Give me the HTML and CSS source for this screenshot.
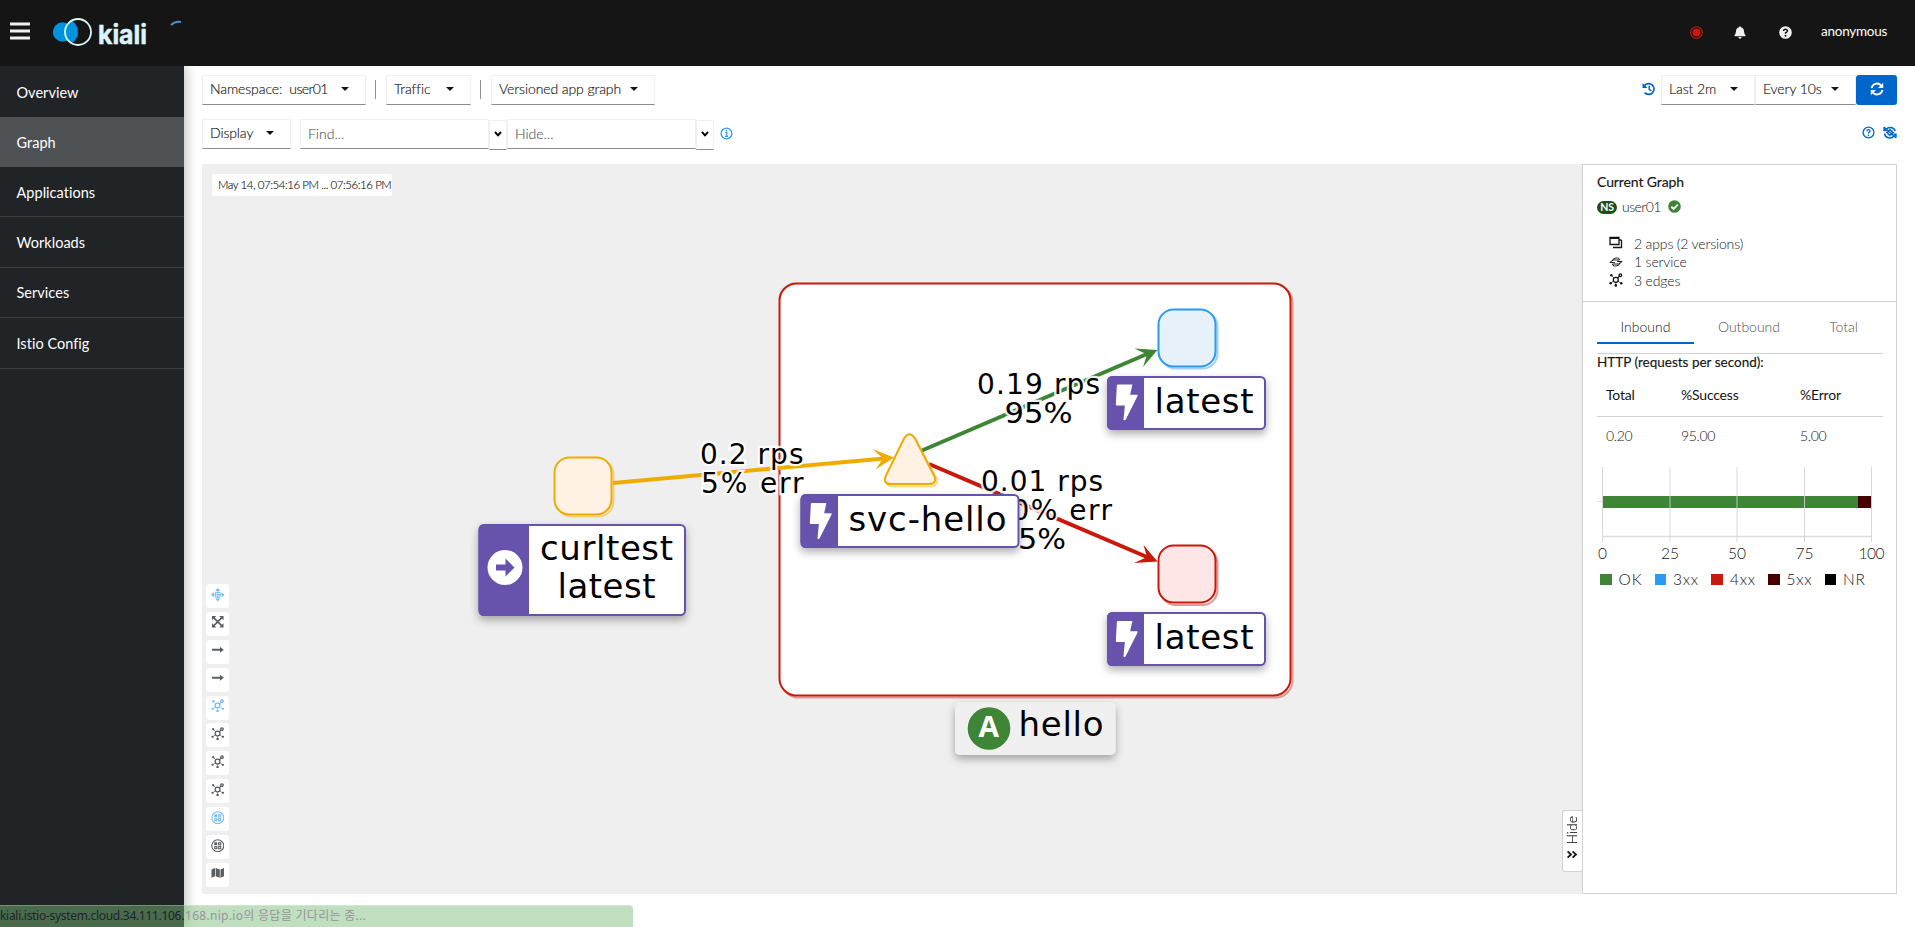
FILE: index.html
```
<!DOCTYPE html>
<html lang="en">
<head>
<meta charset="utf-8">
<title>Kiali</title>
<link rel="stylesheet" href="styles.css">
</head>
<body>
<svg class="defs" width="0" height="0" aria-hidden="true">
  <defs>
    <symbol id="topo" viewBox="0 0 14 14">
      <g fill="none" stroke="currentColor" stroke-width="1.3">
        <circle cx="6.8" cy="6.8" r="2.5"/><circle cx="11.4" cy="2.2" r="1.3"/>
        <path d="M8.6 5l1.900-1.900"/>
        <path d="M5 5L2.800 2.800M4.600 8.200L2 10M9 8.200l2.600 1.800M6.800 9.300v2" stroke-width=".7"/>
      </g>
      <g fill="currentColor"><circle cx="2.300" cy="2.300" r="1.200"/><circle cx="1.600" cy="10.200" r="1.200"/><circle cx="12.300" cy="10.200" r="1.200"/><circle cx="6.800" cy="12.400" r="1.300"/></g>
    </symbol>
    <symbol id="ns" viewBox="0 0 14 14">
      <g fill="none" stroke="currentColor" stroke-width="1.1"><circle cx="7" cy="7" r="6.200"/>
        <rect x="7.900" y="3.900" width="2.200" height="2.200"/><rect x="3.900" y="7.900" width="2.200" height="2.200"/><rect x="7.900" y="7.900" width="2.200" height="2.200"/></g>
      <rect x="3.400" y="3.400" width="3" height="3" fill="currentColor"/>
    </symbol>
    <symbol id="arrow" viewBox="0 0 14 14"><path d="M1 5.900h8.300V3.900l4 3.100-4 3.100V8.100H1z" fill="currentColor"/></symbol>
    <symbol id="bolt" viewBox="0 0 22 36"><path d="M2.300 .6h14.500l-2.200 10h6.700q1.200 .2 .5 1.400L10.300 35q-1.600 2-2.300 .2L9.400 21.200H1.500q-1.200-.2-1-1.400L1.500 1.300z" fill="#fff"/></symbol>
  </defs>
</svg>
<header class="masthead">
  <svg class="burger" width="20" height="18" viewBox="0 0 20 18"><path d="M0 2h20M0 9h20M0 16h20" stroke="#f0f0f0" stroke-width="3"/></svg>
  <svg class="logo" width="100" height="36" viewBox="0 0 100 36">
    <defs><clipPath id="ring"><circle cx="26" cy="18" r="13"/></clipPath></defs>
    <circle cx="10.500" cy="18" r="9.700" fill="#0093dd"/>
    <g clip-path="url(#ring)"><circle cx="26" cy="18" r="13" fill="#151515"/><circle cx="12.500" cy="18" r="13.500" fill="#0093dd"/></g>
    <circle cx="26" cy="18" r="13" fill="none" stroke="#d9f5fd" stroke-width="1.800"/>
    <text x="46" y="29.500" textLength="49" lengthAdjust="spacingAndGlyphs" class="brand">kiali</text>
  </svg>
  <svg class="spin" width="12" height="7" viewBox="0 0 12 7"><path d="M1 5.200Q5 .8 11 2" fill="none" stroke="#4a90cf" stroke-width="1.900"/></svg>
  <div class="tools">
    <svg width="13" height="13" viewBox="0 0 13 13"><circle cx="6.500" cy="6.500" r="5.800" fill="none" stroke="#c9190b" stroke-width="1.100"/><circle cx="6.500" cy="6.500" r="4" fill="#c9190b"/></svg>
    <svg class="bell" width="12" height="13" viewBox="0 0 12 13"><path d="M6 .3q.8 0 .8 1 3 .6 3.200 4Q10.200 8 11.500 9q.3 1.200-.7 1.300H1.200Q.2 10.200.5 9 1.800 8 2 5.300q.2-3.400 3.200-4 0-1 .8-1zM4.400 11h3.200Q7.400 12.700 6 12.700T4.400 11z" fill="#f0f0f0"/></svg>
    <svg class="help" width="13" height="13" viewBox="0 0 13 13"><circle cx="6.500" cy="6.500" r="6.300" fill="#f0f0f0"/><path d="M4.500 5Q4.600 3.200 6.500 3.200T8.500 5Q8.400 6 6.600 6.800v.9" fill="none" stroke="#151515" stroke-width="1.500"/><circle cx="6.500" cy="9.700" r="1" fill="#151515"/></svg>
    <span class="user">anonymous</span>
  </div>
</header>
<div class="body">
  <nav class="side">
    <a class="first">Overview</a><a class="on">Graph</a><a>Applications</a><a>Workloads</a><a>Services</a><a>Istio Config</a>
  </nav>
  <main class="main">
    <div class="bar top">
      <div class="dd ns-dd"><span>Namespace:</span><span class="val">user01</span><i class="caret"></i></div>
      <i class="sep"></i>
      <div class="dd traffic"><span>Traffic</span><i class="caret"></i></div>
      <i class="sep"></i>
      <div class="dd vers"><span>Versioned app graph</span><i class="caret"></i></div>
      <div class="right">
        <svg width="14" height="14" viewBox="0 0 14 14"><path d="M2.400 3.600A5.400 5.400 0 1 1 2.600 10.600" fill="none" stroke="#06c" stroke-width="1.700"/><path d="M.5 1v5h5z" fill="#06c"/><path d="M7.200 3.800v3.600l2.200 1.500" fill="none" stroke="#06c" stroke-width="1.500"/></svg>
        <div class="dd last"><span>Last 2m</span><i class="caret"></i></div>
        <div class="dd every"><span>Every 10s</span><i class="caret"></i></div>
        <div class="refresh"><svg width="14" height="14" viewBox="0 0 14 14"><path d="M1.600 6.200A5.400 5.400 0 0 1 11 3.400M12.400 7.800A5.400 5.400 0 0 1 3 10.600" fill="none" stroke="#fff" stroke-width="1.900"/><path d="M13.200.8v5.200H8zM.8 13.200V8H6z" fill="#fff"/></svg></div>
      </div>
    </div>
    <div class="bar second">
      <div class="dd display"><span>Display</span><i class="caret"></i></div>
      <div class="field">Find...</div><div class="pick"><svg width="8" height="6" viewBox="0 0 8 6"><path d="M1 1l3 3.300L7 1" fill="none" stroke="#000" stroke-width="2"/></svg></div>
      <div class="field hide-f">Hide...</div><div class="pick"><svg width="8" height="6" viewBox="0 0 8 6"><path d="M1 1l3 3.300L7 1" fill="none" stroke="#000" stroke-width="2"/></svg></div>
      <svg class="info" width="13" height="13" viewBox="0 0 13 13"><circle cx="6.500" cy="6.500" r="5.400" fill="none" stroke="#2b9af3" stroke-width="1.300"/><path d="M5.200 5.700h1.600v3.500M5 9.400h3.200" fill="none" stroke="#2b9af3" stroke-width="1.200"/><circle cx="6.500" cy="3.700" r=".9" fill="#2b9af3"/></svg>
      <div class="right two">
        <svg width="13" height="13" viewBox="0 0 13 13"><circle cx="6.500" cy="6.500" r="5.400" fill="none" stroke="#06c" stroke-width="1.300"/><path d="M4.900 5.200Q4.900 3.700 6.500 3.700T8.100 5.200Q8 6 6.600 6.700v.8" fill="none" stroke="#06c" stroke-width="1.300"/><circle cx="6.500" cy="9.300" r=".8" fill="#06c"/></svg>
        <svg width="14" height="13" viewBox="0 0 14 13"><g fill="none" stroke="#06c"><path d="M3 3.500A5.400 5.400 0 0 1 12.300 5M11 10A5.400 5.400 0 0 1 1.500 7.500" stroke-width="1.500"/><circle cx="7" cy="6.500" r="2.300" stroke-width="1.500"/><path d="M7 2.500v2M7 8.500v2M3 6.500h2M9 6.500h2M1 1l12 11" stroke-width="1.100"/></g><path d="M.3.800v4.500h4.200zM13.700 12V7.500H9.500z" fill="#06c"/></svg>
      </div>
    </div>
    <div class="stage">
      <div class="canvas">
        <svg class="graph" width="1380" height="730" viewBox="202 164 1380 730">
          <defs><filter id="sh" x="-20%" y="-30%" width="140%" height="180%"><feDropShadow dx="0" dy="4" stdDeviation="4" flood-color="#000" flood-opacity=".32"/></filter></defs>
          <rect x="781.500" y="285.500" width="511" height="412" rx="17" fill="none" stroke="#c9190b" stroke-width="2" opacity=".4"/>
          <rect x="779.500" y="283.500" width="511" height="412" rx="17" fill="#fff" stroke="#c9190b" stroke-width="2"/>
          <g fill="none" stroke-width="4">
            <path d="M613 483L884 458.500" stroke="#f0ab00"/><path d="M922 450.500L1147 354" stroke="#3e8635"/><path d="M929 464L1147 557" stroke="#c9190b"/>
          </g>
          <path d="M894 457.500L872.500 449 883 458.500 875.500 469.500z" fill="#f0ab00"/>
          <path d="M1157.500 350L1134.500 348.500 1147 354.500 1143 367z" fill="#3e8635"/>
          <path d="M1157.500 561.500L1143.500 545 1147 557 1134 563z" fill="#c9190b"/>
          <g fill="none" stroke-width="2" opacity=".45">
            <rect x="556.500" y="459.500" width="57" height="57" rx="15" stroke="#f0ab00"/><rect x="1160.500" y="311.500" width="57" height="57" rx="15" stroke="#2b9af3"/><rect x="1160.500" y="548" width="57" height="57" rx="15" stroke="#c9190b"/>
            <path d="M907 440Q911.500 432 916 440L937 479Q938 486 931 486.500H892Q885 486 887 479z" stroke="#f0ab00"/>
          </g>
          <g stroke-width="2">
            <rect x="554.500" y="457.500" width="57" height="57" rx="15" fill="#fff1e4" stroke="#f0ab00"/><rect x="1158.500" y="309.500" width="57" height="57" rx="15" fill="#e7f1fa" stroke="#2b9af3"/><rect x="1158.500" y="545.500" width="57" height="57" rx="15" fill="#fee6e6" stroke="#c9190b"/>
            <path d="M904 438.500Q909.500 430 915 438.500L934.500 476.500Q937 484 929 484H891Q883 484 885.500 476.500z" fill="#fff1e4" stroke="#f0ab00"/>
          </g>
          <g class="rate">
            <text x="700" y="463.500" textLength="103.500">0.2 rps</text><text x="701" y="492.500" textLength="102.500">5% err</text>
            <text x="977" y="394" textLength="123">0.19 rps</text><text x="1004.500" y="423" textLength="68" lengthAdjust="spacingAndGlyphs">95%</text>
            <text x="981" y="491" textLength="122">0.01 rps</text><text x="973" y="520" textLength="139">100% err</text><text x="1018" y="549" textLength="48" lengthAdjust="spacingAndGlyphs">5%</text>
          </g>
          <g filter="url(#sh)"><rect x="479.500" y="525" width="205.500" height="90" rx="4.500" fill="#fff" stroke="#6753ac" stroke-width="2"/><path d="M529 524H485Q478.500 524 478.500 530V610Q478.500 616 485 616H529z" fill="#6753ac"/></g>
          <circle cx="505" cy="567.500" r="17.500" fill="#fff"/><path d="M496 564.500h9.500v-6l9 9-9 9v-6H496z" fill="#6753ac"/>
          <g filter="url(#sh)"><rect x="801.500" y="495" width="217" height="52" rx="4.500" fill="#fff" stroke="#6753ac" stroke-width="2"/><path d="M838 494H806Q800.500 494 800.500 500V542Q800.500 548 806 548H838z" fill="#6753ac"/></g>
          <g filter="url(#sh)"><rect x="1108" y="377" width="157" height="52" rx="4.500" fill="#fff" stroke="#6753ac" stroke-width="2"/><path d="M1144 376H1112.500Q1107 376 1107 382V424Q1107 430 1112.500 430H1144z" fill="#6753ac"/></g>
          <g filter="url(#sh)"><rect x="1108" y="613" width="157" height="52" rx="4.500" fill="#fff" stroke="#6753ac" stroke-width="2"/><path d="M1144 612H1112.500Q1107 612 1107 618V660Q1107 666 1112.500 666H1144z" fill="#6753ac"/></g>
          <rect x="955" y="702.500" width="160.500" height="52.500" rx="5" fill="#f0f0f0" filter="url(#sh)"/>
          <use href="#bolt" x="809" y="502.500" width="23" height="36.500"/><use href="#bolt" x="1115" y="384" width="23" height="36.500"/><use href="#bolt" x="1115" y="620.500" width="23" height="36.500"/>
          <ellipse cx="989" cy="728.500" rx="21.300" ry="21.300" fill="#3e8635"/><text x="978.500" y="737" textLength="20.500" lengthAdjust="spacingAndGlyphs" class="app">A</text>
          <g class="name">
            <text x="540" y="560" textLength="133">curltest</text><text x="557.500" y="598" textLength="98">latest</text>
            <text x="848.500" y="530.500" textLength="158">svc-hello</text><text x="1154.500" y="412.500" textLength="99">latest</text><text x="1154.500" y="648.500" textLength="99">latest</text><text x="1018.500" y="736" textLength="85">hello</text>
          </g>
        </svg>
        <div class="stamp">May 14, 07:54:16 PM ... 07:56:16 PM</div>
        <div class="gtools">
          <b class="act"><svg viewBox="0 0 14 14"><path d="M7 0l2.600 3H4.400zM7 14l2.600-3H4.400zM0 7l3-2.600v5.200zM14 7l-3-2.600v5.200z" fill="currentColor"/><path d="M7 3.500v7M3.500 7h7M4.500 4.500h5v5h-5z" stroke="currentColor" fill="none"/></svg></b>
          <b><svg viewBox="0 0 14 14"><path d="M1 1h4.500L1 5.500zM13 1v4.500L8.500 1zM1 13V8.500L5.500 13zM13 13H8.500L13 8.500z" fill="currentColor"/><path d="M2.500 2.500l9 9M11.500 2.500l-9 9" stroke="currentColor" stroke-width="1.700"/></svg></b>
          <b><svg><use href="#arrow"/></svg></b><b><svg><use href="#arrow"/></svg></b>
          <b class="act"><svg><use href="#topo"/></svg></b><b><svg><use href="#topo"/></svg></b><b><svg><use href="#topo"/></svg></b><b><svg><use href="#topo"/></svg></b>
          <b class="act"><svg><use href="#ns"/></svg></b><b><svg><use href="#ns"/></svg></b>
          <b><svg viewBox="0 0 14 14"><path d="M.5 3.500L4.200 2v8.700L.5 12.200zM4.900 2l4.200 1.500v8.700L4.900 10.700zM9.800 3.500L13.500 2v8.700l-3.700 1.500z" fill="currentColor"/></svg></b>
        </div>
        <div class="hide"><svg width="8" height="11" viewBox="0 0 8 11"><path d="M.8.800L4 4.200 7.200.800M.8 5.800L4 9.200l3.200-3.400" transform="translate(0 .3)" fill="none" stroke="#151515" stroke-width="1.800"/></svg><span>Hide</span></div>
      </div>
      <aside class="panel">
        <section class="summary">
          <h3>Current Graph</h3>
          <div class="nsline"><span class="badge">NS</span><span>user01</span><svg width="13" height="13" viewBox="0 0 13 13"><circle cx="6.500" cy="6.500" r="6.300" fill="#3e8635"/><path d="M3.300 6.700l2.300 2.200 4.200-4.300" fill="none" stroke="#fff" stroke-width="1.900"/></svg></div>
          <ul>
            <li><svg width="14" height="14" viewBox="0 0 14 14"><path d="M1 1.500h9v7H1zM12.500 4v7.500H4M10.500 4h2" fill="none" stroke="#151515" stroke-width="1.300"/><path d="M1 1h9v2H1z" fill="#151515"/></svg>2 apps (2 versions)</li>
            <li><svg width="14" height="14" viewBox="0 0 14 14"><path d="M3.200 6Q4 3 7 3h1.500Q10.500 3 10.500 5H4L.8 7.500h5M11 7.500Q10.300 11 7 11H5.500Q3.500 11 3.500 9H10l3.200-2.500H8" fill="none" stroke="#151515" stroke-width=".95"/></svg>1 service</li>
            <li><svg width="14" height="14"><use href="#topo"/></svg>3 edges</li>
          </ul>
        </section>
        <section class="traffic-info">
          <div class="tabs"><span class="sel">Inbound</span><span class="t2">Outbound</span><span class="t3">Total</span></div>
          <h4>HTTP (requests per second):</h4>
          <div class="row head"><span>Total</span><span>%Success</span><span>%Error</span></div>
          <div class="row"><span>0.20</span><span>95.00</span><span>5.00</span></div>
          <svg class="chart" width="290" height="130" viewBox="1596 464 290 130">
            <path d="M1597 501.500h6" stroke="#ddd"/>
            <path d="M1602.500 536.500h269" stroke="#ddd" stroke-width="1.500"/>
            <path d="M1603 496h255v12h-255z" fill="#3e8635"/><path d="M1858 496h13.500v12H1858z" fill="#470000"/>
            <path d="M1602.500 467v75M1670 467v75M1737 467v75M1804.500 467v75M1871.500 467v75" stroke="#d2d2d2" opacity=".85"/>
            <g class="tick" text-anchor="middle"><text x="1602.500" y="559">0</text><text x="1670" y="559">25</text><text x="1737" y="559">50</text><text x="1804.500" y="559">75</text><text x="1871.500" y="559" textLength="26">100</text></g>
            <path d="M1600 574h12v11h-12z" fill="#3e8635"/><path d="M1655 574h11v11h-11z" fill="#2b9af3"/><path d="M1711 574h12v11h-12z" fill="#c9190b"/><path d="M1768 574h12v11h-12z" fill="#470000"/><path d="M1825 574h11v11h-11z" fill="#000"/>
            <g class="tick"><text x="1618.500" y="585" textLength="23">OK</text><text x="1673" y="585" textLength="25">3xx</text><text x="1730" y="585" textLength="25">4xx</text><text x="1786.500" y="585" textLength="25">5xx</text><text x="1843" y="585" textLength="22">NR</text></g>
          </svg>
        </section>
      </aside>
    </div>
  </main>
</div>
<div class="status"><span class="s1">kiali.istio-system.cloud.34.111.106.</span><span class="s2">168.nip.io의 응답을 기다리는 중...</span></div>
</body>
</html>
```
FILE: styles.css
```
* { box-sizing: border-box; }
body { margin: 0; width: 1915px; height: 927px; overflow: hidden; display: flex; flex-direction: column; background: #fff; font: 300 14px/1.5 "Lato", "Open Sans", sans-serif; color: #151515; }
svg { display: block; flex: none; }
.defs { position: absolute; }
.masthead { height: 66px; flex: none; background: #151515; display: flex; align-items: flex-start; position: relative; z-index: 2; }
.burger { margin: 22px 0 0 10px; }
.logo { margin: 14px 0 0 22px; }
.brand { font: 700 26px "Inter", sans-serif; fill: #d9f5fd; stroke: #d9f5fd; stroke-width: .5px; }
.spin { margin: 20px 0 0 18px; }
.tools { margin: 21px 28px 0 auto; height: 22px; display: flex; align-items: center; color: #fff; }
.tools > svg:first-child { margin-right: -1px; }
.bell { margin-left: 32px; }
.help { margin: 0 29px 0 33px; }
.user { font-weight: 400; width: 66px; font-size: 13.500px; white-space: nowrap; letter-spacing: -.25px; padding-bottom: 1px; }
.body { flex: 1; min-height: 0; display: flex; }
.side { width: 184px; flex: none; background: #212427; box-shadow: 2px 0 12px rgba(3,3,3,.25); }
.side a { display: flex; align-items: center; height: 50.400px; padding: 1px 0 0 16.500px; border-bottom: 1px solid #3c3f42; color: #fff; font: 400 14.500px "Lato", sans-serif; letter-spacing: .03px; }
.side a.first { height: 51px; border: 0; }
.side a.on { background: #4f5255; border-color: #4f5255; height: 50px; }
.main { flex: 1; min-width: 0; padding: 9px 18px 0; }
.bar { display: flex; height: 44px; }
.dd { height: 30px; border: 1px solid #f0f0f0; border-bottom-color: #8a8d90; display: flex; align-items: center; justify-content: space-between; padding: 0 17px 3px 7px; white-space: nowrap; background: #fff; font-weight: 300; font-size: 14px; letter-spacing: -.1px; color: #151515; -webkit-text-stroke: .15px #151515; }
.caret { border: 4px solid transparent; border-top: 4.500px solid #151515; border-bottom: 0; }
.ns-dd { width: 164px; padding-right: 16px; }
.val { letter-spacing: -.6px; margin-right: 6px; }
.sep { width: 1px; height: 19px; margin: 5px 9px 0; background: #8a8d90; }
.traffic { width: 85px; padding-right: 16px; }
.ns-dd + .sep { margin-right: 10px; }
.traffic + .sep { margin-right: 10px; }
.vers { width: 164px; padding-right: 16px; }
.right { margin-left: auto; display: flex; }
.right > svg { margin: 7px 5px 0 0; }
.last { width: 94px; padding-right: 16px; } .every { width: 101px; padding-right: 16px; }
.refresh { width: 41px; height: 30px; border-radius: 3px; background: #06c; display: flex; align-items: center; justify-content: center; padding-bottom: 2px; }
.second { height: 45px; }
.display { width: 89px; padding-right: 16px; }
.field { width: 189px; height: 30px; margin-left: 9px; border: 1px solid #f0f0f0; border-bottom-color: #8a8d90; padding: 3px 7px; color: #5a5d61; font-weight: 300; -webkit-text-stroke: .15px #5a5d61; }
.field.hide-f { margin-left: 0; }
.pick { width: 18px; height: 30px; margin-top: 1px; border: 1px solid #f0f0f0; border-bottom-color: #8a8d90; display: flex; align-items: center; justify-content: center; padding-bottom: 3px; }
.info { margin: 8px 0 0 6px; }
.two { gap: 8px; } .two > svg { margin: 7px 0 0; }
.stage { display: flex; height: 730px; }
.canvas { position: relative; width: 1380px; height: 730px; background: #efefef; flex: none; }
.graph { position: absolute; inset: 0; }
.rate text { font: 28px "DejaVu Sans", sans-serif; paint-order: stroke; stroke: #fff; stroke-width: 4.500px; stroke-opacity: .9; fill: #000; }
.name text { font: 34px "DejaVu Sans", sans-serif; fill: #000; }
.app { font: 700 28px "Open Sans", sans-serif; fill: #fff; }
.stamp { position: absolute; left: 10px; top: 10px; width: 180px; height: 22px; padding-left: 6px; background: #fff; border-radius: 2px; font: 300 11.500px/21px "Lato", sans-serif; letter-spacing: -.45px; color: #151515; -webkit-text-stroke: .15px #151515; white-space: nowrap; }
.gtools { position: absolute; left: 4px; top: 420px; display: flex; flex-direction: column; gap: 3.900px; }
.gtools b { width: 23px; height: 24px; border-radius: 3px; background: #fff; color: #5a5d61; padding: 3.500px 0 0 4.500px; }
.gtools svg { width: 13.500px; height: 13.500px; }
.gtools .act { color: #73bcf7; }
.hide { position: absolute; right: 0; top: 646px; width: 20px; height: 62px; background: #fff; border: 1px solid #d2d2d2; border-right: 0; border-radius: 3px 0 0 3px; writing-mode: vertical-rl; display: flex; flex-direction: row-reverse; align-items: center; justify-content: flex-start; padding: 11px 2px 11px 0; gap: 4px; font-weight: 300; font-size: 14px; line-height: 18px; -webkit-text-stroke: .15px #151515; }
.hide span { transform: rotate(180deg); }
.hide svg { transform: rotate(-90deg); }
.panel { width: 315px; height: 730px; border: 1px solid #d2d2d2; background: #fff; flex: none; }
.summary { height: 137px; border-bottom: 1px solid #d2d2d2; padding: 5px 0 0 14px; }
h3, h4 { margin: 0; font-weight: 400; font-size: 14px; color: #151515; -webkit-text-stroke: .15px #151515; }
h3 { line-height: 24px; letter-spacing: -.1px; }
.nsline { display: flex; align-items: center; height: 24px; gap: 5px; font-weight: 300; color: #151515; letter-spacing: -.55px; }
.nsline svg { margin-left: 2px; }
.badge { width: 20px; height: 13px; border-radius: 7px; background: #1e4f18; color: #fff; font: 700 10.500px/13px "Lato", sans-serif; text-align: center; letter-spacing: -.2px; margin-top: 2px; }
ul { list-style: none; margin: 16px 0 0 12px; padding: 0; }
li { display: flex; align-items: center; height: 18.500px; gap: 11px; font-weight: 300; color: #151515; letter-spacing: -.15px; }
.traffic-info { padding: 0 13px 0 14px; }
.tabs { height: 52px; border-bottom: 1px solid #d2d2d2; display: flex; font-weight: 300; color: #4f5255; padding-top: 10px; }
.tabs span { height: 32px; line-height: 29px; text-align: center; }
.tabs .sel { width: 97px; border-bottom: 2px solid #06c; color: #151515; }
.t2 { width: 110px; } .t3 { width: 79px; }
h4 { line-height: 16px; padding-bottom: 2px; font-size: 13.500px; white-space: nowrap; }
.row { display: grid; grid-template-columns: 75px 119px 1fr; padding-left: 9px; height: 40px; line-height: 37px; font-weight: 300; color: #151515; letter-spacing: -.35px; }
.row.head { height: 45px; line-height: 45px; border-bottom: 1px solid #d2d2d2; font-weight: 400; letter-spacing: -.2px; }
.chart { margin: 7px 0 0 -1px; }
.tick { font: 300 15.500px "Lato", sans-serif; fill: #151515; }
.status { position: absolute; left: 0; top: 905px; width: 633px; height: 22px; z-index: 5; background: rgba(118,187,120,.47); border-top: 1px solid rgba(255,255,255,.25); border-radius: 0 4px 0 0; font: 12px/20px "Noto Sans", "Noto Sans CJK KR", sans-serif; white-space: nowrap; display: flex; }
.s1 { width: 185px; color: #20222c; letter-spacing: -.3px; } .s2 { color: #98949c; letter-spacing: .3px; }
```
